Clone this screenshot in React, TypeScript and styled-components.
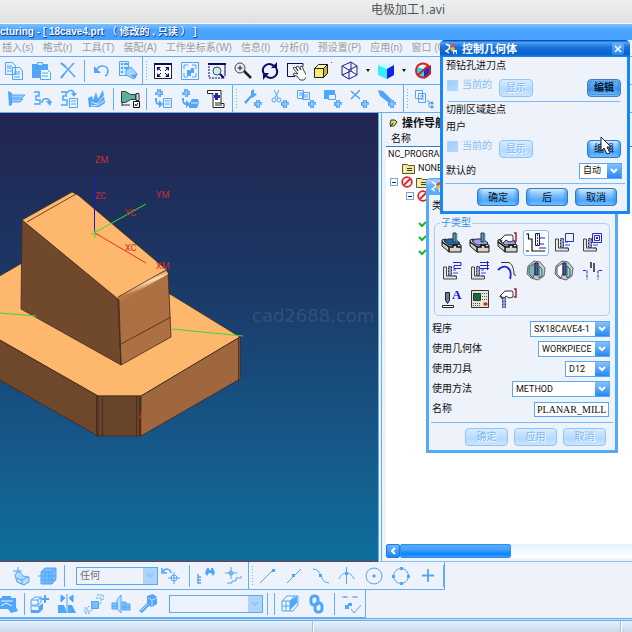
import React from "react";
import styled, { createGlobalStyle, css } from "styled-components";

const C = {
  face: "#edf2fb",
  line: "#62aff7",
  icon: "#4fa6fb",
  navy: "#0c0c66",
};

const Global = createGlobalStyle`
  * { box-sizing: border-box; }
  body { margin: 0; background: ${C.face}; font: 10px/14px "Liberation Sans", "Noto Sans CJK SC", sans-serif; color: #111; overflow: hidden; }
  button, select, input, fieldset, legend { font: inherit; margin: 0; padding: 0; border: 0; }
`;

const Page = styled.div`
  position: relative;
  display: flex;
  flex-direction: column;
  min-height: 100vh;
`;
const PlayerBar = styled.header`
  height: 24px;
  padding: 0 187px 3px 0;
  display: flex;
  align-items: center;
  justify-content: flex-end;
  background: linear-gradient(#eef0ef, #dfe1e1);
  border-bottom: 1px solid #f4fafe;
  color: #50545c;
  font-size: 12px;
  font-family: "Noto Sans", "Noto Sans CJK SC", sans-serif;
`;
const AppTitle = styled.h1`
  height: 16px;
  margin: 0;
  font-size: 10px;
  line-height: 15px;
  white-space: pre;
  color: #f4faff;
  text-shadow: 1px 1px 0 #12499b, 0 1px 1px #1b57ad;
  background: linear-gradient(#7cc0ff, #4aa3fe 40%, #46a2ff);
`;
const Menu = styled.nav`
  display: flex;
  gap: 9px;
  height: 17px;
  padding-left: 2px;
  border-bottom: 1px solid ${C.line};
`;
const MenuItem = styled.button`
  background: none;
  color: #9b9da1;
  white-space: nowrap;
  line-height: 15px;
  align-self: flex-start;
`;
const Bar = styled.div<{ $fit?: boolean }>`
  display: flex;
  align-items: center;
  height: 28px;
  border-bottom: 1px solid ${C.line};
  ${(p) => p.$fit && css`
    align-self: flex-start;
    border-right: 1px solid ${C.line};
  `}
`;
const Group = styled.div<{ $count: number; $width: number; $left?: number }>`
  display: grid;
  flex: none;
  grid-template-columns: repeat(${(p) => p.$count}, 1fr);
  justify-items: center;
  width: ${(p) => p.$width}px;
  margin-left: ${(p) => p.$left ?? 3}px;
`;
const Tool = styled.button<{ $dark?: boolean }>`
  display: flex;
  background: none;
  color: ${(p) => (p.$dark ? C.navy : C.icon)};
`;
const Sep = styled.span<{ $left?: number }>`
  flex: none;
  width: 1px;
  height: 22px;
  margin-left: ${(p) => p.$left ?? 3}px;
  background: ${C.line};
`;
const Edge = styled(Sep)`
  height: 27px;
`;
const Grip = styled.span`
  flex: none;
  width: 1px;
  height: 20px;
  margin-left: 3px;
  background: repeating-linear-gradient(${C.line} 0 1px, transparent 1px 3px);
`;
const DropArrow = styled.button`
  flex: none;
  width: 10px;
  height: 20px;
  background: none;
  display: grid;
  place-items: center;
  &::before {
    content: "";
    border: 2px solid transparent;
    border-top: 3px solid #111;
    border-bottom: 0;
  }
`;

const Work = styled.main`
  display: flex;
  flex: 1;
  min-height: 0;
`;
const Viewport = styled.section`
  flex: 1;
  min-width: 0;
  overflow: hidden;
  background: linear-gradient(#222450, #1b3a67 40%, #15598a 75%, #0e6f9c);
  border-bottom: 1px solid #7b3a48;
`;
const Scene = styled.svg`
  display: block;
  width: 100%;
  height: 448px;
`;
const Navigator = styled.section`
  display: flex;
  flex-direction: column;
  width: 254px;
  padding: 0 0 3px 4px;
  border-left: 4px double ${C.line};
  border-bottom: 1px solid #8fc0ef;
`;
const NavTitle = styled.h2`
  display: flex;
  align-items: center;
  gap: 4px;
  height: 19px;
  margin: 0;
  padding-left: 3px;
  font-size: 11px;
`;
const NavColumn = styled.div`
  height: 15px;
  padding-left: 5px;
  border-bottom: 1px solid #2a80c8;
`;
const Tree = styled.ul`
  flex: 1;
  margin: 0;
  padding: 0;
  list-style: none;
  background: #fff;
  font: 9px/14px Roboto, sans-serif;
`;
const TreeRow = styled.li<{ $depth: number }>`
  display: flex;
  align-items: center;
  gap: 3px;
  height: 14px;
  padding-left: ${(p) => p.$depth}px;
`;
const Toggle = styled.button`
  width: 8px;
  height: 8px;
  border: 1px solid #74a8dc;
  background: linear-gradient(#224, #224) center / 4px 1px no-repeat;
`;
const ScrollTrack = styled.div`
  display: flex;
  height: 14px;
  background: linear-gradient(#e6f2fe, #fff);
`;
const ScrollButton = styled.button`
  width: 14px;
  display: grid;
  place-items: center;
  border-radius: 2px;
  border: 1px solid #1b7ae6;
  background: linear-gradient(#6cb6ff, #1884fa);
  color: #fff;
`;
const ScrollThumb = styled.div`
  width: 111px;
  border: 1px solid #2f8ff2;
  border-radius: 2px;
  background: linear-gradient(#57acff, #48a5ff 35%, #0d82fd 75%, #3c9cff);
`;
const Status = styled.footer`
  display: flex;
  height: 14px;
  border-top: 3px double ${C.line};
  background: linear-gradient(#e9f0f8, #c9d9ea);
`;
const StatusCell = styled.span<{ $grow?: boolean }>`
  width: 314px;
  border-right: 1px solid #fff;
  box-shadow: inset -1px 0 #a7bdd5;
  ${(p) => p.$grow && css`
    flex: 1;
    margin-right: 10px;
  `}
`;

const Dialog = styled.section<{ $active?: boolean }>`
  position: absolute;
  left: ${(p) => (p.$active ? 440 : 426)}px;
  top: ${(p) => (p.$active ? 40 : 178)}px;
  width: ${(p) => (p.$active ? 190 : 192)}px;
  border: 3px solid ${(p) => (p.$active ? "#1686f8" : "#55a9fa")};
  border-top: 0;
  border-radius: 5px 5px 0 0;
  background: ${C.face};
`;
const DialogTitle = styled.header<{ $active?: boolean }>`
  display: flex;
  align-items: center;
  gap: 4px;
  height: 17px;
  margin: 0 -3px;
  padding: 0 6px 0 4px;
  border-radius: 5px 5px 0 0;
  color: #fff;
  font-size: 11px;
  font-weight: bold;
  background: ${(p) =>
    p.$active
      ? "linear-gradient(#0a50b8 0 1px, #55a5f4 2px, #1a73dc 7px, #0860cf 14px, #1785f5)"
      : "linear-gradient(#5aa9f8 0 1px, #a6d3ff 2px, #62b0fb 8px, #57a9fa)"};
`;
const CloseButton = styled.button`
  display: grid;
  place-items: center;
  width: 12px;
  height: 12px;
  margin-left: auto;
  border-radius: 2px;
  color: #fff;
  background: linear-gradient(#66b0fa, #2585ec);
`;
const Body = styled.div`
  padding: 0 5px 0 3px;
`;
const Line = styled.div<{ $height: number }>`
  display: flex;
  align-items: center;
  height: ${(p) => p.$height}px;
`;
const Rule = styled.hr`
  height: 1px;
  margin: 0 2px;
  border: 0;
  background: #7bbcf6;
`;
const Check = styled.label`
  display: flex;
  align-items: center;
  gap: 4px;
  width: 53px;
  padding: 0 0 5px 1px;
  color: #84c0f7;
  input {
    appearance: none;
    width: 11px;
    height: 11px;
    border: 1px solid #add5fb;
    background: linear-gradient(135deg, #9ccdfb, #b7dafc);
  }
`;
const Push = styled.button<{ $width: number; $focus?: boolean }>`
  flex: none;
  width: ${(p) => p.$width}px;
  height: 18px;
  line-height: 15px;
  border: 1px solid #2e79c9;
  border-radius: 4px;
  color: #07152e;
  background: linear-gradient(90deg, #2a91f8aa, transparent 12% 88%, #2a91f8aa),
    linear-gradient(#d0e9ff, #86c3fd 35%, #4ea8fd 70%, #6fbcff);
  ${(p) => p.$focus && css`
    border-color: #3c7fc4;
    outline: 1px dotted #3a78bb;
    outline-offset: -3px;
    background: linear-gradient(#6cb4f7, #3c95f0 60%, #77bdfb);
    font-weight: bold;
  `}
  &:disabled {
    border-color: #8fc6fa;
    color: #78b8f6;
    text-shadow: 1px 1px #fff;
    background: linear-gradient(#d9ecff, #b4d9fe 60%, #cce5fe);
  }
`;
const End = styled.div`
  margin-left: auto;
  padding-right: 1px;
  display: flex;
`;
const Actions = styled.div<{ $tall?: boolean }>`
  display: flex;
  align-items: ${(p) => (p.$tall ? "center" : "flex-start")};
  justify-content: flex-end;
  gap: ${(p) => (p.$tall ? 6 : 7)}px;
  height: 27px;
  padding: ${(p) => (p.$tall ? "0 9px 0 0" : "4px 10px 0 0")};
`;
const Fields = styled(Line)`
  height: 20px;
`;
const SelectBox = styled.span<{ $width: number; $muted?: boolean }>`
  display: grid;
  flex: none;
  width: ${(p) => p.$width}px;
  height: ${(p) => (p.$muted ? 18 : 16)}px;
  margin-left: ${(p) => (p.$muted ? 0 : "auto")};
  border: 1px solid #5aa8f2;
  background: ${(p) => (p.$muted ? C.face : "#fff")};
  select {
    grid-area: 1 / 1;
    min-width: 0;
    appearance: none;
    padding: 0 14px 0 3px;
    background: none;
    color: ${(p) => (p.$muted ? "#6b7078" : "#111")};
    font: 9px/13px Roboto, "Noto Sans CJK SC", sans-serif;
    font-size: ${(p) => (p.$muted ? 10 : 9)}px;
  }
  span {
    grid-area: 1 / 1;
    justify-self: end;
    display: grid;
    place-items: center;
    width: 14px;
    pointer-events: none;
    color: ${(p) => (p.$muted ? "#91c7fa" : "#fff")};
    background: ${(p) => (p.$muted ? "#acd5fd" : "linear-gradient(#85c1fc, #2489f5)")};
  }
`;
const NameInput = styled.input`
  width: 75px;
  height: 15px;
  margin: 0 1px 0 auto;
  padding: 0 2px;
  border: 1px solid #5aa8f2;
  background: #fff;
  font: 10px/13px "Liberation Serif", serif;
  color: #111;
`;
const SubTypes = styled.fieldset`
  min-width: 0;
  margin: 0 0 3px 2px;
  padding: 0 3px 2px;
  border: 1px solid #a8d2f9;
  border-radius: 5px;
  legend {
    margin-left: 2px;
    padding: 0 1px;
    color: #3b8fdc;
    line-height: 12px;
  }
`;
const SubGrid = styled.div`
  display: grid;
  grid-template-columns: repeat(6, 1fr);
  grid-auto-rows: 28px;
  place-items: center;
`;
const SubButton = styled.button<{ $selected?: boolean }>`
  display: grid;
  place-items: center;
  width: 26px;
  height: 26px;
  border-radius: 3px;
  border: 1px solid ${(p) => (p.$selected ? "#7fbcf3" : "transparent")};
  background: ${(p) => (p.$selected ? "#fff" : "none")};
`;
const Cursor = styled.svg`
  position: absolute;
  left: 600px;
  top: 136px;
`;

const Svg = ({ size = 20, children }: { size?: number; children: React.ReactNode }) => (
  <svg width={size} height={size} viewBox={`0 0 ${size} ${size}`} fill="none" stroke="currentColor" aria-hidden="true">
    {children}
  </svg>
);

const smallPart = (
  <>
    <path d="M11 13h2v-2h4v2h2v3h-2v3h-4v-2h-2z" fill="currentColor" stroke="none" />
    <path d="M15 11v8M12 15h7" stroke="#dcecff" strokeWidth=".6" />
  </>
);
const machine = (
  <g fill="currentColor" stroke="none">
    <path d="M4 0h4v2h2v4H8v2H5V6H2V3h2z" />
    <path d="M2 9h2v4l2 1v-3l4 4-4 4v-3c-3 0-4-3-4-7z" />
    <path d="M6 0v8M2 4h8" stroke="#dcecff" strokeWidth=".6" />
  </g>
);

const icons: Record<string, React.ReactNode> = {
  copy: <><path d="M1.500 1.500h7l3 3v9h-10zM8.500 6.500h7l3 3v9h-10z" fill="#e3f1ff" /><path d="M3 5h5M3 7h5M3 10h5M10 11h6M10 13h6M10 16h6" /></>,
  paste: <><path d="M1 3h16v14H1z" fill="currentColor" stroke="none" /><path d="M6.500 3V1.500h5V4.500h-5z" fill="#d7ebff" /><path d="M9.500 8.500h7l3 3v7h-10z" fill="#eef6ff" /><path d="M11 12h6M11 15h6" /></>,
  cut: <><path d="M3 2c5 4 9 8 14 14M16 2C11 7 7 12 3 17" strokeWidth="1.500" /><path d="M3 2l5 4M3 17l3-4" strokeWidth="2" /></>,
  undo: <><path d="M5 10c3-7 12-6 12 0 0 2-1 4-3 5" strokeWidth="1.500" /><path d="M3 5v7h7z" fill="currentColor" stroke="none" /></>,
  props: <><path d="M1.500 .5h9v14h-9z" fill="#d6eaff" /><path d="M3 3h2M3 7h2M3 11h2M6 3h4M6 7h4" strokeWidth="2" /><path d="M8 9l5-3 6 7-3 5-8-4z" fill="#a5d3ff" /><path d="M13 14l4 3 2-4" fill="currentColor" /></>,
  fit: <><path d="M1.500 2.500h17v15h-17z" fill="#fff" stroke="#222" /><path d="M1 3h18" strokeWidth="2" /><path d="M5 7l3 3M15 7l-3 3M5 15l3-3M15 15l-3-3" /><path d="M4 6h4L4 10zM16 6h-4l4 4zM4 16h4L4 12zM16 16h-4l4-4z" fill="currentColor" stroke="none" /></>,
  fitSel: <g color={C.icon}><path d="M1.500 1.500h17v17h-17z" /><path d="M4 8V4h4M12 4h4v4M4 12v4h4M12 16h4v-4" /><path d="M7 9h4V7h3v5h-3v3H7z" fill="currentColor" stroke="none" /></g>,
  zoomBox: <><path d="M1 3h17v12" /><path d="M1 3h18" strokeWidth="2" /><path d="M2 5v12h15" strokeDasharray="2 1" /><circle cx="10" cy="10" r="4" fill="#c8f2ef" stroke="#365060" /><path d="M13 13l4 4" strokeWidth="2" /></>,
  zoom: <><circle cx="7" cy="7" r="5" fill="#eee" stroke="#444" /><path d="M4.500 7h5M7 4.500v5" /><path d="M11 10l7 7" stroke="#222" strokeWidth="2.500" /></>,
  rotate: <><path d="M4 13C0 6 8 0 14 5M16 7c4 7-4 13-10 8" strokeWidth="2" /><path d="M11 7h6V1zM9 12H3v7z" fill="currentColor" stroke="none" /></>,
  pan: <><path d="M1.500 2.500v13H9M1 2.500h16v3" /><path d="M7 7l2-1 3 4-2-4 2-1 3 4-1-3 2-1 2 5 3 5-3 4h-4l-3-4-4-1 1-2 4 1z" fill="#fff" stroke="#444" /></>,
  box: <><path d="M1.500 7.500l4-4h9l-4 4z" fill="#fff9a5" stroke="#222" /><path d="M1.500 7.500h9v9h-9z" fill="#f5ee70" stroke="#222" /><path d="M10.500 7.500l4-4v9l-4 4z" fill="#c2b634" stroke="#222" /><path d="M18 1h1v1h-1z" fill="#a33" stroke="none" /></>,
  wire: <path d="M2 5l9-4 6 4v9l-8 4-7-4zM2 5l7 4 8-4M9 9v9M2 14l9-4 6 4M11 1v9" stroke="#20208a" />,
  cube: <><path d="M2 4l9 4v10l-9-4z" fill="#36edf9" stroke="none" /><path d="M2 4l7-2 9 2-7 4z" fill="#c5ffff" stroke="none" /><path d="M11 8l7-4v10l-7 4z" fill="#1220e8" stroke="none" /></>,
  deny: <><path d="M4 6l7 2v10l-7-3z" fill="#2ad9ed" stroke="none" /><path d="M11 8l7-4v9l-7 5z" fill="#1533c8" stroke="none" /><circle cx="10" cy="9.500" r="7" stroke="#d91f22" strokeWidth="2" /><path d="M5 14L15 5" stroke="#d91f22" strokeWidth="2" /></>,
  wedge: <><path d="M2 2l4 2v12l-3 1z" fill="currentColor" stroke="none" /><path d="M5 6h14l-3 3H6M6 10h11l-3 3H6" fill="#98cbff" /></>,
  path: <><path d="M1 3h5v4H3v4h4v4H1M9 14c0-5 7-6 8-1" strokeWidth="1.500" /><path d="M13 12h6l-2 5z" fill="currentColor" stroke="none" /></>,
  pathDoc: <><path d="M1 3h5v4H3v4h4v5H1M7 4c2-4 7-3 7 1" strokeWidth="1.500" /><path d="M11 4h6l-3 4z" fill="currentColor" stroke="none" /><path d="M9.500 9.500h8v9h-8zM11 12h5M11 15h5" /></>,
  folder: <><path d="M1 9l4-2 1 4 3-8 2 7 5-9 2 13-6 4H2z" fill="currentColor" stroke="none" /><path d="M4 13l6 2 7-8M4 17l7-1 6-4" stroke="#dceeff" /></>,
  verify: <><path d="M1.500 2.500h4l5 3h5v5h-5l-5 3h-4z" fill="#64ad96" stroke="#184a3d" /><path d="M16 4.500h3v7h-3z" fill="#d5dfd6" stroke="#333" /><path d="M13.500 12.500h6v6h-6z" fill="#fff" stroke="#111" /><path d="M15 15l1 2 2-3" stroke="#111" /><path d="M2 16h8M2 14v3" stroke="#333" /></>,
  opDoc: <>{machine}<path d="M10.500 9.500h8v9h-8z" fill="#deefff" /><path d="M12 12h5M12 15h5" /></>,
  opMachine: <>{machine}<path d="M9 15l3-5h6l1 4-2 5H9z" fill="currentColor" stroke="none" /><path d="M11 14h7" stroke="#dcecff" /></>,
  scroll: <><path d="M4 1.500h11v13h3v4H7V4.500H1.500V1.500h3" fill="#fff" stroke="#222" /><path d="M9 4h3v2h2v3h-2v2H9V9H8V6h1z" fill="#2525b4" stroke="none" /><path d="M9 14h6M9 16h7" stroke="#222" /></>,
  wrench: <><path d="M1 13L8 6V2l3-2v4l3 1-3 3-3 1-5 6z" fill="currentColor" stroke="none" />{smallPart}</>,
  scissors: <><path d="M4 1l4 8M9 1L5 9" /><circle cx="4" cy="11" r="2" /><circle cx="9" cy="11" r="2" />{smallPart}</>,
  copyPart: <><path d="M.5 1.500h6v8h-6zM5.500 3.500h7v7h-7zM2 4h3M2 6h3M7 6h4M7 8h4" />{smallPart}</>,
  pastePart: <><path d="M1 1h11v9H1z" fill="currentColor" stroke="none" /><path d="M5.500 5.500h7v5h-7z" fill="#e4f2ff" />{smallPart}</>,
  cutPart: <><path d="M1 2l9 8M10 1l-9 9" strokeWidth="1.500" />{smallPart}</>,
  torch: <><path d="M1 1l5 1 9 9-3 3L3 7z" fill="currentColor" stroke="none" />{smallPart}</>,
  list: <><path d="M1.500 1.500h7v8h-7zM4.500 4.500h7v9h-7zM6 7h4M6 10h4M13 12h2v6h3M15 14h3" /><path d="M17 13h2v2h-2zM17 17h2v2h-2z" fill="currentColor" /></>,
  snapPart: <><path d="M2 5h9M7 1v9" /><path d="M4 9l2-3h3l3 4 6 1v5l-5 3-7-3z" fill="#b8dcff" /><path d="M5 12l6 2 6-3M11 14v5" /></>,
  snapCube: <><path d="M3 6l4-4h11v11l-4 5H3z" fill="#78bcff" /><path d="M3 6h11v12M14 6l4-4M7 6v12M11 6v12M3 10h15M3 14h15M0 10h3" /></>,
  undoPoint: <><path d="M2 6c2-4 7-4 8 1M1 2v5h5" strokeWidth="1.500" /><circle cx="13" cy="12" r="3" /><path d="M7 12h12M13 6v12" /></>,
  find: <><path d="M2 8v9h3M2 11h3M2 14h3" strokeWidth="1.500" /><path d="M9 7l2-5h2v2h2V2h2l2 5-2 3-2-3h-2l-2 3z" fill="currentColor" stroke="none" /></>,
  stairs: <><circle cx="8" cy="7" r="2" /><path d="M2 7h12M8 1v12M4 17h5v-2h4v-3h5v-2" /></>,
  endPoint: <><path d="M3 17L16 4" /><path d="M15 3h3v3h-3z" fill="currentColor" stroke="none" /></>,
  midPoint: <><path d="M3 17L17 3" /><path d="M8 8h3v3H8z" fill="currentColor" stroke="none" /></>,
  curve: <><path d="M2 3c10 0 6 14 16 14" /><path d="M8 8h3v3H8z" fill="currentColor" stroke="none" /></>,
  cross: <><path d="M2 13c3-8 12-8 15 0M9.500 1v17" /><path d="M8 6h3v3H8z" fill="currentColor" stroke="none" /></>,
  center: <><circle cx="10" cy="10" r="8" /><path d="M9 9h2v2H9z" fill="currentColor" /></>,
  quadrant: <><circle cx="10" cy="10" r="7.500" /><path d="M9 1h3v3H9zM9 16h3v3H9zM1 9h3v3H1zM16 9h3v3h-3z" fill="currentColor" stroke="none" /></>,
  plus: <path d="M10 3v13M4 9.500h12" strokeWidth="1.800" />,
  camera: <><path d="M0 4h4V2h9v2h5v9l2 4-7 2-3-4H0z" fill="currentColor" stroke="none" /><path d="M3 7h12M3 12l5-3 6 3" stroke="#e8f3ff" /></>,
  addCube: <><path d="M1 6l4-3h6l-3 3H1v5h7V6M8 11l3-3V3M1 12h8v6H1z" /><path d="M9 12l4-3v6l-4 4H1v-3h8z" fill="currentColor" stroke="none" /><path d="M15 1v8M11 5h8" strokeWidth="2" /></>,
  mirror: <><path d="M1 11h6l3 8H1zM11 11h4l4 8h-8z" fill="currentColor" stroke="none" /><path d="M10 0v19M4 1l4 3-4 4zM16 1l-4 3 4 4z" fill="currentColor" /></>,
  offset: <><path d="M7.500 7.500h7v7h-7z" fill="#78bcff" /><path d="M5 12l-2 2v3h4l2-2M12 4h5v5l-2 2M13 1h6v6M1 13v6h6" strokeDasharray="2 1" /></>,
  symmetry: <><path d="M10 1v18l-4-4V6z" fill="#c4e1ff" /><path d="M1 9h5v6H1zM1 12h5M11 8h4v2h4v6h-8z" fill="#80c0ff" /><path d="M14 10v6M11 13h8" /></>,
  tool: <><path d="M1 17l8-8V2l6-2 4 3v7l-5 3-3-1-7 7z" fill="currentColor" stroke="none" /><path d="M10 4l4 2 5-2M14 6v6M3 17l7-7" stroke="#d6eaff" strokeWidth=".8" /></>,
  section: <><path d="M2 7l5-5h11v9l-5 6H2zM2 7h8v10M10 7l5-5M2 12h8M6 7v10" /><path d="M10 7l7-5v7l-7 7z" fill="currentColor" stroke="none" /></>,
  chain: <><rect x="4" y="2" width="7" height="9" rx="3" strokeWidth="3" /><rect x="8" y="9" width="7" height="9" rx="3" strokeWidth="3" /></>,
  approve: <><path d="M1 3h6M11 3h6M4 2v2M14 2v2M10 15l3 4 7-8" /><path d="M4 11h3V9h4v3h-3v3H4z" fill="currentColor" stroke="none" /></>,
};

const tray = (fill: string) => (
  <>
    <path d="M1 8l4-1 1 4h9l5 2v7H8l-7-6z" fill="#d5d6c8" stroke="#151515" />
    <path d="M3 9l4-2h7l5 4-3 2H8z" fill={fill} stroke="#1c2550" />
    <path d="M1 10l7 5v5M8 15h4v-2h4v2h4" stroke="#111" strokeWidth="1.500" />
  </>
);
const cutter = <><path d="M12 1h3v9h-3z" fill="#6c8db8" stroke="#1b3751" /><path d="M15.500 1v9" stroke="#4a917e" strokeWidth="1.500" /></>;
const hand = <path d="M3 8l5-5h7l1 1v5l-4 1-3-2-3 3-2-1 1-2-2 1z" fill="#fff" stroke="#333" />;
const cuff = <path d="M17 1h2v8h-2" stroke="#a22035" strokeWidth="1.500" />;
const corner = <><path d="M2.500 7v12h13v-3H5.500V7z" fill="#e6e7e3" stroke="#444" /><path d="M7.500 6.500h3v9h-3z" fill="#95a3c4" stroke="#222a50" strokeDasharray="2 1" /><path d="M12 10h3M12 13h5M12 16h3" stroke="#4048c0" /></>;
const hollow = (right: boolean) => (
  <>
    <path d="M3 6l6-5 6 1 5 6-1 8-6 4-7-2-4-4z" fill="#c4ccc8" stroke="#666" />
    <path d="M4 7l6-4v10l-2 5-4-4z" fill={right ? "#fff" : "#78b6ae"} stroke="#557" />
    <path d="M10 3h3v12h-3z" fill="#4a5fb0" stroke="#16233f" />
    <path d="M14 6l3 3v7l-3 2z" fill="#99d0c8" stroke="#355e6a" />
  </>
);

const subTypes: [string, React.ReactNode][] = [
  ["面铣削区域", <>{tray("#256799")}{cutter}</>],
  ["面铣削", <>{tray("#a0a3f0")}{cutter}</>],
  ["手工面铣削", <>{tray("#a0a3f0")}{hand}{cuff}</>],
  ["平面铣", <><path d="M1 2h3M3.500 2v5H7v12h13M1 19h3" stroke="#111" strokeWidth="1.200" /><path d="M10.500 1.500h4v12h-4z" fill="#f2f4f8" stroke="#222" /><path d="M14 6h6M15 12h4M14 16h7" stroke="#2020b4" strokeWidth="1.200" /><path d="M12.500 2v11" stroke="#25a" strokeDasharray="2 1" /></>],
  ["平面轮廓铣", <>{corner}<path d="M12.500 1.500h8v8h-8z" fill={C.face} stroke="#2b31bd" /></>],
  ["跟随部件", <>{corner}<path d="M11.500 1.500h9v9h-9zM13.500 3.500h5v5h-5z" fill={C.face} stroke="#2525cf" /><path d="M15 5h2v2h-2z" fill="#2525cf" stroke="none" /></>],
  ["往复", <>{corner}<path d="M12 2.500h8v3h-7v3h7" stroke="#2525cf" /></>],
  ["单向", <>{corner}<path d="M11 2.500h9M11 5.500h9M11 8.500h9M18.500 1v9" stroke="#2525cf" /></>],
  ["清理拐角", <><path d="M1 10c7-7 15-2 12 9" stroke="#2525d5" strokeWidth="1.800" /><path d="M4 2.500h8c4 2 5 8 5 12l2 1" stroke="#333" /></>],
  ["精铣壁", hollow(false)],
  ["精铣底面", hollow(true)],
  ["螺纹铣", <><path d="M2 10.500h4v9M21 10.500h-4v9" stroke="#2727c3" strokeDasharray="3 1" /><path d="M10 2v6M13 3v9" stroke="#222" strokeWidth="1.500" /></>],
  ["文本铣削", <><path d="M4.500 4.500h4v8l-2 3-2-3z" fill="#6b78a7" stroke="#222" /><path d="M1.500 17.500h11v2h-11z" fill="#fff" stroke="#222" /><text x="11" y="11" fill="#1515ce" stroke="none" fontSize="13" fontWeight="bold" fontFamily="Liberation Serif, serif">A</text></>],
  ["机床控制", <><path d="M2.500 2.500h17v17h-17z" fill="#e4e5db" stroke="#333" /><path d="M4.500 5.500h7v7h-7z" fill="#186b3f" stroke="#333" /><path d="M13 5.500h5M13 8.500h5M13 11.500h5M4 15.500h8M4 17.500h8" stroke="#555" strokeDasharray="1 1" /><path d="M15 15h3v2h-3z" fill="#d21" stroke="#d21" /></>],
  ["自定义", <>{hand}{cuff}<path d="M5.500 9.500h3v10h-3z" fill="#8ba0c6" stroke="#2b376e" strokeDasharray="2 1" /></>],
];

const ToolSet = ({ names, width, left, dark }: { names: string[]; width: number; left?: number; dark?: boolean }) => (
  <Group $count={names.length} $width={width} $left={left}>
    {names.map((n) => (
      <Tool key={n} $dark={dark} aria-label={n}><Svg>{icons[n]}</Svg></Tool>
    ))}
  </Group>
);

const Chevron = () => (
  <svg width="8" height="6" viewBox="0 0 8 6" fill="none" stroke="currentColor" strokeWidth="2"><path d="M1 1l3 3 3-3" /></svg>
);

const Dropdown = ({ id, label, value, width, muted }: { id?: string; label?: string; value: string; width: number; muted?: boolean }) => (
  <SelectBox $width={width} $muted={muted}>
    <select id={id} aria-label={label} defaultValue={value}><option>{value}</option></select>
    <span><Chevron /></span>
  </SelectBox>
);

const Logo = () => (
  <svg width="14" height="14" viewBox="0 0 14 14" aria-hidden="true">
    <path d="M2 2l4 2-1 3-3 2 3 2" stroke="#fff" strokeWidth="1.500" fill="none" />
    <path d="M6 6l3-2 2 3-3 3z" fill="#f4be32" /><path d="M6 4l3-2 2 2-4 2z" fill="#e04c3c" />
    <path d="M9 8h4v4H9z" fill="#d7edff" /><path d="M10 10h2v3h-2z" fill="#2873cc" />
  </svg>
);

const NoEntry = () => (
  <svg width="12" height="12" viewBox="0 0 12 12" fill="none" stroke="#e02424" strokeWidth="1.800"><circle cx="6" cy="6" r="4.800" /><path d="M3 9l6-6" /></svg>
);
const Folder = () => (
  <svg width="13" height="11" viewBox="0 0 13 11" fill="#f6e886" stroke="#5b573a"><path d="M.5 1.500h5l1 1h6v8H.5z" /><path d="M5 5.500h5M5 7.500h5" stroke="#246" /><path d="M2.500 4v5" stroke="#fff" /></svg>
);
const Tick = () => (
  <svg width="9" height="8" viewBox="0 0 9 8" fill="none" stroke="#19b82c" strokeWidth="2"><path d="M1 3l3 3 4-4" /></svg>
);

const PointRow = ({ focus }: { focus?: boolean }) => (
  <Line $height={27}>
    <Check><input type="checkbox" disabled />当前的</Check>
    <Push $width={34} disabled>显示</Push>
    <End><Push $width={34} $focus={focus}>编辑</Push></End>
  </Line>
);

const Model = () => (
  <Scene viewBox="0 113 378 448" preserveAspectRatio="xMinYMin slice" role="img" aria-label="18cave4">
    <defs>
      <linearGradient id="edge" x1="0" y1="0" x2=".5" y2="1">
        <stop offset=".4" stopColor="#d78c50" /><stop offset=".52" stopColor="#ffe0ae" /><stop offset=".7" stopColor="#ba7642" />
      </linearGradient>
    </defs>
    <g stroke="#3d2a1d" strokeWidth=".8" strokeLinejoin="round">
      <path d="M-2 277L60 241 170 294 240 337 141 396H98L-2 339z" fill="#fdb86e" />
      <path d="M-2 339L98 396V436L-2 379z" fill="#6f482b" />
      <path d="M98 396h43v40H98z" fill="#68442a" />
      <path d="M141 396l99-59v42l-99 57z" fill="#9e673e" />
      <path d="M96.500 396v40M102.500 396v40M136.500 396v40M139.500 396v40M238.500 338v42" />
      <path d="M22 220l96 79 3 66-100-56z" fill="#70492c" />
      <path d="M118 299l50-28 3 66-50 28z" fill="#ac7042" />
      <path d="M22 220l50-28 6 3 89 75-49 29z" fill="#fdb86e" />
      <path d="M27 222l49-28" />
      <path d="M118 297l48-27 2 4-48 28z" fill="url(#edge)" stroke="none" />
      <path d="M118 297l48-27M121 344l50-27M119 300l2 65" fill="none" />
    </g>
    <path d="M0 313l36 3M172 329l71 7" stroke="#38dd2c" />
    <path d="M94.500 233V175" stroke="#2016c9" />
    <path d="M94 233l52-29M91 234h8M95 230v8" stroke="#39e02b" />
    <path d="M95 233l51 30" stroke="#ed311b" />
    <path d="M141.500 411v24M139 419l4-7" stroke="#c83a25" />
    <g fill="#c92f2b" fontSize="9" fontFamily="Roboto, sans-serif">
      <text x="95" y="163">ZM</text><text x="95" y="199">ZC</text><text x="156" y="198">YM</text>
      <text x="125" y="216">YC</text><text x="125" y="251">XC</text><text x="156" y="269">XM</text>
    </g>
    <text x="252" y="322" fill="#4e7499" fillOpacity=".38" fontSize="18" fontFamily="DejaVu Sans, sans-serif">cad2688.com</text>
  </Scene>
);

const menus = ["插入(s)", "格式(r)", "工具(T)", "装配(A)", "工作坐标系(W)", "信息(I)", "分析(I)", "预设置(P)", "应用(n)", "窗口 (O)"];

const parameters: [string, string, string, number][] = [
  ["program", "程序", "SX18CAVE4-1", 80],
  ["geometry", "使用几何体", "WORKPIECE", 72],
  ["cutter", "使用刀具", "D12", 45],
  ["method", "使用方法", "METHOD", 98],
];

export default function App() {
  return (
    <Page>
      <Global />
      <PlayerBar>电极加工1.avi</PlayerBar>
      <AppTitle>{"cturing - [ 18cave4.prt （ 修改的 , 只读 ） ]"}</AppTitle>
      <Menu>{menus.map((m) => <MenuItem key={m}>{m}</MenuItem>)}</Menu>

      <Bar>
        <ToolSet names={["copy", "paste", "cut"]} width={80} left={1} />
        <Sep />
        <ToolSet names={["undo", "props"]} width={53} />
        <Edge $left={1} />
        <Grip />
        <ToolSet names={["fit", "fitSel", "zoomBox", "zoom", "rotate", "pan", "box", "wire"]} width={213} dark />
        <DropArrow aria-label="线框" />
        <ToolSet names={["cube"]} width={26} left={0} dark />
        <DropArrow aria-label="着色" />
        <ToolSet names={["deny"]} width={28} left={0} dark />
      </Bar>
      <Bar>
        <ToolSet names={["wedge", "path", "pathDoc", "folder"]} width={107} />
        <Sep />
        <ToolSet names={["verify"]} width={26} />
        <Sep />
        <ToolSet names={["opDoc", "opMachine"]} width={53} />
        <ToolSet names={["scroll"]} width={26} left={0} dark />
        <Edge />
        <Grip />
        <ToolSet names={["wrench", "scissors", "copyPart", "pastePart", "cutPart", "torch"]} width={160} />
        <Edge />
        <Grip />
        <ToolSet names={["list", "opDoc"]} width={53} />
      </Bar>

      <Work>
        <Viewport><Model /></Viewport>
        <Navigator>
          <NavTitle>
            <svg width="9" height="10" viewBox="0 0 9 10"><path d="M2 2h4l2 2-3 4H2L1 6z" fill="#d9df45" stroke="#333" /><path d="M1 9l3-4" stroke="#222" /></svg>
            操作导航器
          </NavTitle>
          <NavColumn>名称</NavColumn>
          <Tree>
            <TreeRow $depth={2}>NC_PROGRAM</TreeRow>
            <TreeRow $depth={16}><Folder />NONE</TreeRow>
            <TreeRow $depth={4}><Toggle aria-label="折叠" /><NoEntry /><Folder /></TreeRow>
            <TreeRow $depth={20}><Toggle aria-label="折叠" /><NoEntry /></TreeRow>
            <TreeRow $depth={32} />
            <TreeRow $depth={32}><Tick /></TreeRow>
            <TreeRow $depth={32}><Tick /></TreeRow>
            <TreeRow $depth={32}><Tick /></TreeRow>
          </Tree>
          <ScrollTrack>
            <ScrollButton aria-label="向左"><svg width="6" height="8" viewBox="0 0 6 8" fill="none" stroke="currentColor" strokeWidth="2"><path d="M5 1L2 4l3 3" /></svg></ScrollButton>
            <ScrollThumb />
          </ScrollTrack>
        </Navigator>
      </Work>

      <Bar $fit>
        <ToolSet names={["snapPart", "snapCube"]} width={53} left={8} />
        <Sep />
        <Group $count={1} $width={82} $left={11}><Dropdown label="过滤" value="任何" width={82} muted /></Group>
        <ToolSet names={["undoPoint"]} width={26} left={0} />
        <Sep $left={5} />
        <ToolSet names={["find", "stairs"]} width={53} />
        <Edge $left={2} />
        <Grip />
        <ToolSet names={["endPoint", "midPoint", "curve", "cross", "center", "quadrant", "plus"]} width={187} left={1} />
        <Sep $left={2} />
      </Bar>
      <Bar $fit>
        <ToolSet names={["camera"]} width={20} left={-2} />
        <Sep $left={6} />
        <ToolSet names={["addCube", "mirror", "offset", "symmetry", "tool"]} width={134} left={2} />
        <Group $count={1} $width={94} $left={8}><Dropdown label="组件" value="" width={94} muted /></Group>
        <Sep $left={4} />
        <Sep $left={6} />
        <ToolSet names={["section", "chain"]} width={54} left={1} />
        <Sep $left={4} />
        <ToolSet names={["approve"]} width={29} left={1} />
      </Bar>
      <Status><StatusCell /><StatusCell $grow /></Status>

      <Dialog aria-label="操作">
        <DialogTitle><Logo /></DialogTitle>
        <Body>
          <Line $height={22}>类型</Line>
          <SubTypes>
            <legend>子类型</legend>
            <SubGrid>
              {subTypes.map(([name, art], i) => (
                <SubButton key={name} aria-label={name} $selected={i === 3}><Svg size={22}>{art}</Svg></SubButton>
              ))}
            </SubGrid>
          </SubTypes>
          {parameters.map(([id, label, value, width]) => (
            <Fields $height={20} key={id}>
              <label htmlFor={id}>{label}</label>
              <Dropdown id={id} value={value} width={width} />
            </Fields>
          ))}
          <Fields $height={20}>
            <label htmlFor="name">名称</label>
            <NameInput id="name" defaultValue="PLANAR_MILL" />
          </Fields>
        </Body>
        <Line $height={3} />
        <Rule />
        <Actions $tall>
          <Push $width={43} disabled>确定</Push>
          <Push $width={43} disabled>应用</Push>
          <Push $width={43} disabled>取消</Push>
        </Actions>
      </Dialog>

      <Dialog $active aria-label="控制几何体">
        <DialogTitle $active>
          <Logo />控制几何体
          <CloseButton aria-label="关闭"><svg width="8" height="8" viewBox="0 0 8 8" stroke="currentColor" strokeWidth="1.500"><path d="M1 1l6 6M7 1L1 7" /></svg></CloseButton>
        </DialogTitle>
        <Body>
          <Line $height={17}>预钻孔进刀点</Line>
          <PointRow focus />
          <Rule />
          <Line $height={16}>切削区域起点</Line>
          <Line $height={17}>用户</Line>
          <PointRow />
          <Line $height={17}>
            <label htmlFor="default">默认的</label>
            <Dropdown id="default" value="自动" width={43} />
          </Line>
        </Body>
        <Line $height={4} />
        <Rule />
        <Actions>
          <Push $width={42}>确定</Push>
          <Push $width={42}>后</Push>
          <Push $width={42}>取消</Push>
        </Actions>
      </Dialog>

      <Cursor width="12" height="20" viewBox="0 0 12 20" aria-hidden="true">
        <path d="M1 1v14l3-3 3 6 3-1-3-6h4z" fill="#fff" stroke="#222" />
      </Cursor>
    </Page>
  );
}
